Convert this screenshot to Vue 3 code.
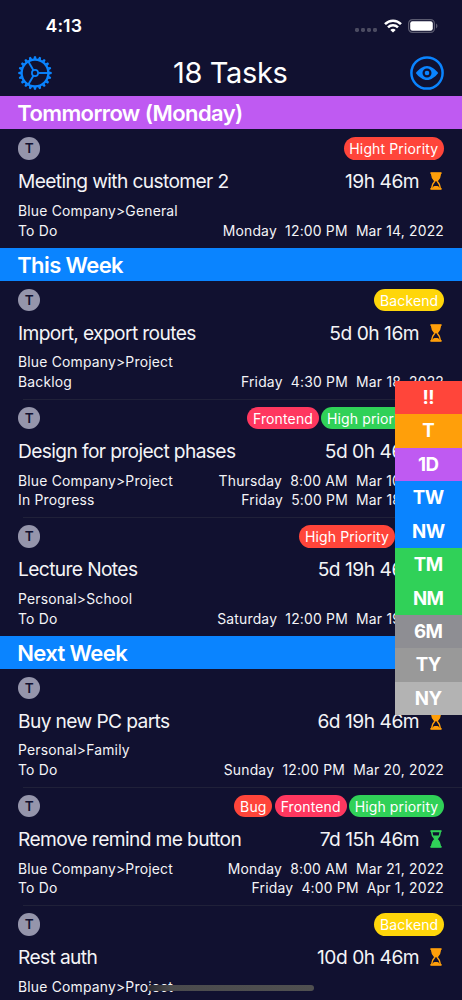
<script setup>
const T = (title, left, tags, path, status, end, start, icon = 'orange', inset = 0) =>
  ({ title, left, tags, path, status, end, start, icon, inset })

const sections = [
  { name: 'Tommorrow (Monday)', tone: 'purple', tasks: [
    T('Meeting with customer 2', '19h 46m', [['Hight Priority', 'red', 100.5]], 'Blue Company>General', 'To Do', ['Monday', '12:00 PM', 'Mar 14, 2022']),
  ] },
  { name: 'This Week', tone: 'blue', tasks: [
    T('Import, export routes', '5d 0h 16m', [['Backend', 'yellow', 69.7]], 'Blue Company>Project', 'Backlog', ['Friday', '4:30 PM', 'Mar 18, 2022']),
    T('Design for project phases', '5d 0h 46m', [['Frontend', 'pink', 72.3], ['High priority', 'green', 95]], 'Blue Company>Project', 'In Progress', ['Friday', '5:00 PM', 'Mar 18, 2022'], ['Thursday', '8:00 AM', 'Mar 10, 2022'], 'orange', 27.7),
    T('Lecture Notes', '5d 19h 46m', [['High Priority', 'red', 95.5]], 'Personal>School', 'To Do', ['Saturday', '12:00 PM', 'Mar 19, 2022'], null, 'orange', 49.3),
  ] },
  { name: 'Next Week', tone: 'blue', tasks: [
    T('Buy new PC parts', '6d 19h 46m', [], 'Personal>Family', 'To Do', ['Sunday', '12:00 PM', 'Mar 20, 2022']),
    T('Remove remind me button', '7d 15h 46m', [['Bug', 'red', 38], ['Frontend', 'pink', 72.3], ['High priority', 'green', 95]], 'Blue Company>Project', 'To Do', ['Friday', '4:00 PM', 'Apr 1, 2022'], ['Monday', '8:00 AM', 'Mar 21, 2022'], 'green'),
    T('Rest auth', '10d 0h 46m', [['Backend', 'yellow', 69.7]], 'Blue Company>Project'),
  ] },
]

const jumps = [
  ['!!', 'red'], ['T', 'orange'], ['1D', 'purple'], ['TW', 'blue'], ['NW', 'blue'],
  ['TM', 'green'], ['NM', 'green'], ['6M', 'gray1'], ['TY', 'gray2'], ['NY', 'gray3'],
]
const teeth = Array.from({ length: 20 }, (_, i) => i * 18)
</script>

<template>
  <main class="screen">
    <header>
      <div class="status">
        <span class="clock">4:13</span>
        <div class="signals">
          <span class="dots"><i v-for="n in 4" :key="n" /></span>
          <svg class="wifi" width="18" height="14" viewBox="0 0 18 14" fill="none" stroke="#fff" stroke-width="2.5">
            <path d="M1 5.2C5.5.5 12.5.5 17 5.2" />
            <path d="M4 8.3C6.8 5.5 11.2 5.5 14 8.3" />
            <path d="M9 13.6 6.3 10.9C7.8 9.4 10.2 9.4 11.7 10.9Z" fill="#fff" stroke="none" />
          </svg>
          <svg class="battery" width="30" height="14" viewBox="0 0 30 14">
            <rect x=".6" y=".6" width="25.8" height="12.8" rx="3.8" fill="none" stroke="#5b5b70" stroke-width="1.2" />
            <rect x="2.2" y="2.3" width="22.6" height="9.4" rx="2.2" fill="#fff" />
            <path d="M28 4.6C29.9 5.3 29.9 8.7 28 9.4Z" fill="#5b5b70" />
          </svg>
        </div>
      </div>
      <div class="nav">
        <svg width="34" height="34" viewBox="-17 -17 34 34" fill="none" stroke="#0a84ff">
          <circle r="13.4" stroke-width="2.3" />
          <path v-for="a in teeth" :key="a" :transform="`rotate(${a})`" d="M-1.6-14H1.6L1-16.7H-1Z" fill="#0a84ff" stroke="none" />
          <circle r="3.1" stroke-width="1.7" />
          <path v-for="a in [0, 120, 240]" :key="'s' + a" :transform="`rotate(${a})`" d="M3.2 0H13" stroke-width="1.9" />
        </svg>
        <h1>18 Tasks</h1>
        <svg width="34" height="34" viewBox="-17 -17 34 34" fill="none" stroke="#0a84ff">
          <circle r="15.6" stroke-width="2.5" />
          <path d="M-11.2 0C-8-4.2-4-7.1 0-7.1S8-4.2 11.2 0C8 4.2 4 7.1 0 7.1S-8 4.2-11.2 0Z" fill="#0a84ff" stroke="none" />
          <circle r="3.4" stroke="#111130" stroke-width="2.2" fill="#0a84ff" />
        </svg>
      </div>
    </header>

    <section v-for="s in sections" :key="s.name">
      <h2 :class="s.tone">{{ s.name }}</h2>
      <article v-for="t in s.tasks" :key="t.title">
        <div class="top">
          <span class="avatar">T</span>
          <div class="tags" :style="{ marginRight: t.inset + 'px' }">
            <span v-for="g in t.tags" :key="g[0]" class="tag" :class="g[1]" :style="{ width: g[2] + 'px' }">{{ g[0] }}</span>
          </div>
        </div>
        <div class="title">
          <span>{{ t.title }}</span>
          <span class="left">{{ t.left }}</span>
          <svg width="12" height="18" viewBox="0 0 12 18" :class="t.icon">
            <path d="M1 .3H11Q11.8.3 11.8 1.1T11 1.9H1Q.2 1.9.2 1.1T1 .3ZM1 16.1H11Q11.8 16.1 11.8 16.9T11 17.7H1Q.2 17.7.2 16.9T1 16.1Z" fill="currentColor" />
            <path d="M1.6 1.5C1.6 5 2.7 6.5 4.9 9C2.7 11.5 1.6 13 1.6 16.5H10.4C10.4 13 9.3 11.5 7.1 9C9.3 6.5 10.4 5 10.4 1.5Z" fill="none" stroke="currentColor" stroke-width="1.5" />
            <template v-if="t.icon === 'orange'">
              <path d="M1.6 1.5C1.6 5 2.7 6.5 4.9 9H7.1C9.3 6.5 10.4 5 10.4 1.5Z" fill="currentColor" />
              <path d="M2.2 16.5 3.6 14.3C5 14 7 14 8.4 14.3L9.8 16.5Z" fill="currentColor" />
            </template>
            <path v-else d="M3.3 5.6H8.7L7.1 9C9.3 11.5 10.4 13 10.4 16.5H1.6C1.6 13 2.7 11.5 4.9 9Z" fill="currentColor" />
          </svg>
        </div>
        <div class="line">
          <span>{{ t.path }}</span>
          <span v-if="t.start" class="date"><span v-for="d in t.start" :key="d">{{ d }}</span></span>
        </div>
        <div v-if="t.status" class="line">
          <span>{{ t.status }}</span>
          <span class="date"><span v-for="d in t.end" :key="d">{{ d }}</span></span>
        </div>
      </article>
    </section>

    <nav class="jump">
      <span v-for="j in jumps" :key="j[0]" :class="j[1]">{{ j[0] }}</span>
    </nav>
    <div class="home" />
  </main>
</template>

<style>
body { margin: 0; background: #111130; }
</style>

<style scoped>
.screen {
  position: relative; width: 462px; height: 1000px; overflow: hidden;
  background: #111130; color: #f4f4f7; font-family: Inter, "Liberation Sans", sans-serif;
}
header { height: 96px; box-sizing: border-box; padding: 14px 18px 0; }
.status { display: flex; justify-content: space-between; height: 23px; align-items: center; padding: 0 6px 0 27.5px; }
.clock { font-size: 17.7px; font-weight: 600; letter-spacing: .1px; color: #fff; }
.signals { display: flex; align-items: center; }
.dots { display: flex; gap: 1.7px; padding-top: 9px; margin-right: 7px; }
.dots i { width: 4px; height: 4px; border-radius: 1.4px; background: #4b4b61; }
.wifi { margin-right: 6.5px; }
.nav { display: flex; justify-content: space-between; align-items: center; margin: 19px 0 0; height: 34px; }
h1 { margin: 0 0 0 -1.5px; font-size: 29px; font-weight: 400; color: #fff; letter-spacing: -.35px; line-height: 34px; }
h2 {
  margin: 0; height: 33.4px; line-height: 35px; padding-left: 17.2px;
  font-size: 22px; font-weight: 600; letter-spacing: -.6px; color: #fff; white-space: nowrap;
}
article { position: relative; height: 118.2px; box-sizing: border-box; padding: 8px 18px 0; white-space: nowrap; }
article + article::before {
  content: ""; position: absolute; top: -.5px; left: 22.5px; right: 0; height: 1px; background: #202139;
}
.top { display: flex; justify-content: space-between; height: 22.3px; }
.avatar {
  width: 22.3px; height: 22.3px; border-radius: 50%; background: #9595ab; color: #111130;
  font-size: 13.5px; font-weight: 600; line-height: 22.6px; text-align: center;
}
.tags { display: flex; gap: 2.2px; }
.tag {
  height: 22.3px; line-height: 23px; border-radius: 12px; text-align: center;
  color: #fff; font-size: 14px; letter-spacing: .13px;
}
.title { display: flex; align-items: center; height: 41.2px; padding-top: 1px; font-size: 19.2px; letter-spacing: -.62px; }
.title .left { margin-left: auto; margin-right: 10.8px; letter-spacing: -.48px; }
.title svg { margin-right: 2px; }
.title svg.orange { color: #ff9f0a; background: none; }
.title svg.green { color: #30d158; background: none; }
.line {
  display: flex; justify-content: space-between; height: 19.7px; line-height: 19.3px;
  font-size: 13.9px; letter-spacing: .2px;
}
.date { display: flex; gap: 8.2px; }
.red { background: #ff453a; }
.orange { background: #ff9f0a; }
.yellow { background: #ffd60a; }
.green { background: #30d158; }
.blue { background: #0a84ff; }
.purple { background: #bf5af2; }
.pink { background: #ff375f; }
.gray1 { background: #8e8e93; }
.gray2 { background: #999; }
.gray3 { background: #b3b3b3; }
.jump { position: absolute; left: 395px; top: 381px; width: 67px; display: flex; flex-direction: column; }
.jump span {
  height: 33.43px; line-height: 34px; text-align: center; color: #fff;
  font-size: 18.7px; font-weight: 700; letter-spacing: -.6px; text-indent: -.6px;
}
.home {
  position: absolute; left: 148px; bottom: 9px; width: 165.5px; height: 6px; border-radius: 3px;
  background: linear-gradient(90deg, #292931, #4b4b4d 14%, #505050);
}
</style>
